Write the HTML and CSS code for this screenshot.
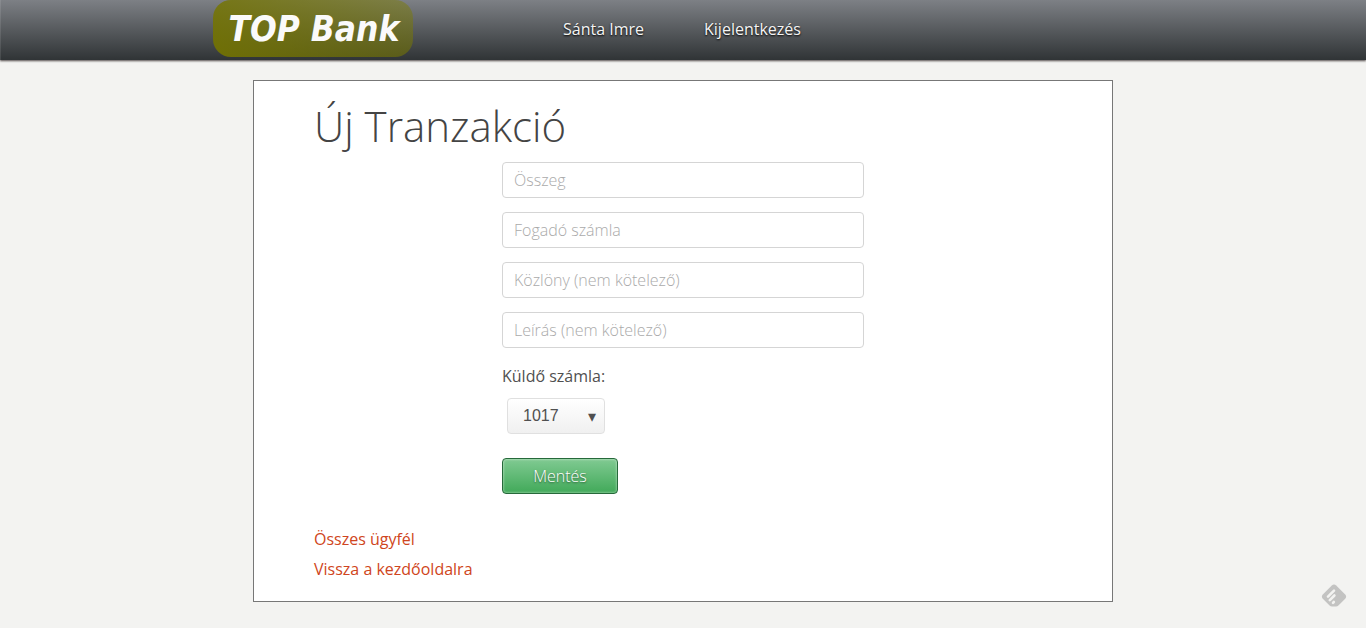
FILE: index.html
```html
<!DOCTYPE html>
<html lang="hu">
<head>
<meta charset="utf-8">
<title>Új Tranzakció - TOP Bank</title>
<link rel="stylesheet" href="styles.css">
</head>
<body>
<header class="topbar">
  <div class="topbar-inner">
    <a class="logo" href="#">TOP Bank</a>
    <nav class="nav">
      <a href="#">Sánta Imre</a>
      <a href="#">Kijelentkezés</a>
    </nav>
  </div>
</header>
<main class="panel">
  <h1>Új Tranzakció</h1>
  <form class="form">
    <input class="field" type="text" placeholder="Összeg" aria-label="Összeg">
    <input class="field" type="text" placeholder="Fogadó számla" aria-label="Fogadó számla">
    <input class="field" type="text" placeholder="Közlöny (nem kötelező)" aria-label="Közlöny">
    <input class="field" type="text" placeholder="Leírás (nem kötelező)" aria-label="Leírás">
    <label class="label" for="account">Küldő számla:</label>
    <div class="select-wrap">
      <select id="account" class="select"><option>1017</option></select>
      <span class="arrow" aria-hidden="true">▾</span>
    </div>
    <button class="submit" type="button">Mentés</button>
  </form>
  <div class="links">
    <a href="#">Összes ügyfél</a>
    <a href="#">Vissza a kezdőoldalra</a>
  </div>
</main>
<a class="badge" href="#" aria-label="Feedly">
  <svg width="26" height="24" viewBox="0 0 26 24">
    <path fill="#c3c3c2" d="M10.8 1.6a3.2 3.2 0 0 1 4.4 0l9 9a3.2 3.2 0 0 1 0 4.2l-6.8 6.8a3.5 3.5 0 0 1-2.4 1h-4a3.5 3.5 0 0 1-2.4-1l-6.8-6.8a3.2 3.2 0 0 1 0-4.2z"/>
    <path stroke="#f3f3f1" stroke-width="2.6" stroke-linecap="round" fill="none" d="M7 12.7l6-6M8.8 16.1l4.6-4.6M12 18.8l.8-.8"/>
  </svg>
</a>
</body>
</html>
```
FILE: styles.css
```css
* { box-sizing: border-box; }

body {
  margin: 0;
  background: #f3f3f1;
  color: #444;
  font-family: "Open Sans", sans-serif;
  font-size: 16px;
  line-height: 30px;
}

a { text-decoration: none; }

.topbar {
  height: 60px;
  background: linear-gradient(#7d8085, #303436);
  box-shadow: inset 1px 0 0 rgba(255, 255, 255, 0.1), 0 1px 2px #504848;
}

.topbar-inner {
  display: flex;
  align-items: flex-start;
  max-width: 940px;
  margin: 0 auto;
}

.logo {
  width: 200px;
  height: 57px;
  padding-left: 2px;
  border-radius: 18px;
  background: linear-gradient(50deg, rgba(116, 116, 0, 0.92), rgba(124, 124, 0, 0.45));
  color: #fafafa;
  font: italic bold 35px/59px "DejaVu Sans Condensed", "DejaVu Sans", sans-serif;
  font-stretch: condensed;
  text-align: center;
}

.nav {
  display: flex;
  margin-left: 120px;
}

.nav a {
  padding: 0 30px;
  color: #f4f4f4;
  line-height: 58px;
  text-shadow: 0 1px 2px #000;
}

.panel {
  max-width: 860px;
  margin: 20px auto 0;
  padding: 15px 60px 17px;
  border: 1px solid #777;
  background: #fff;
}

h1 {
  margin: 0;
  font-size: 42px;
  font-weight: 300;
  line-height: 60px;
}

.form {
  display: flex;
  flex-direction: column;
  align-items: flex-start;
  width: 50%;
  max-width: 362px;
  min-width: 240px;
  margin: 6px auto 0;
}

.field {
  width: 100%;
  height: 36px;
  margin: 0 0 14px;
  padding: 0 11px;
  border: 1px solid #d5d5d5;
  border-radius: 4px;
  background: #fff;
  color: #444;
  font: 300 16px "Open Sans", sans-serif;
}

.field::placeholder { color: #aaa; opacity: 1; }

.label {
  margin-top: -1px;
  color: #505050;
}

.select-wrap {
  position: relative;
  margin: 7px 5px 24px;
}

.select {
  display: block;
  width: 98px;
  height: 36px;
  padding: 0 15px 2px;
  border: 1px solid #e0e0e0;
  border-radius: 4px;
  appearance: none;
  background: linear-gradient(#fff, #f0f0f0);
  color: #505050;
  font: 16px "Liberation Sans", sans-serif;
}

.arrow {
  position: absolute;
  top: 4px;
  right: 9px;
  color: #505050;
  font-family: "DejaVu Sans", sans-serif;
  pointer-events: none;
}

.submit {
  width: 116px;
  height: 36px;
  padding: 0;
  border: 1px solid #26693a;
  border-radius: 4px;
  background: linear-gradient(#80ca92, #41a959);
  box-shadow: inset 0 0 2px 1px rgba(255, 255, 255, 0.3);
  color: #fff;
  font: 300 16px "Open Sans", sans-serif;
  text-shadow: 0 1px 2px rgba(0, 0, 0, 0.5);
}

.links {
  display: flex;
  flex-direction: column;
  align-items: flex-start;
  margin-top: 30px;
}

.links a { color: #cf4520; }

.badge {
  position: fixed;
  right: 19px;
  bottom: 20px;
  height: 24px;
  line-height: 0;
}
```
